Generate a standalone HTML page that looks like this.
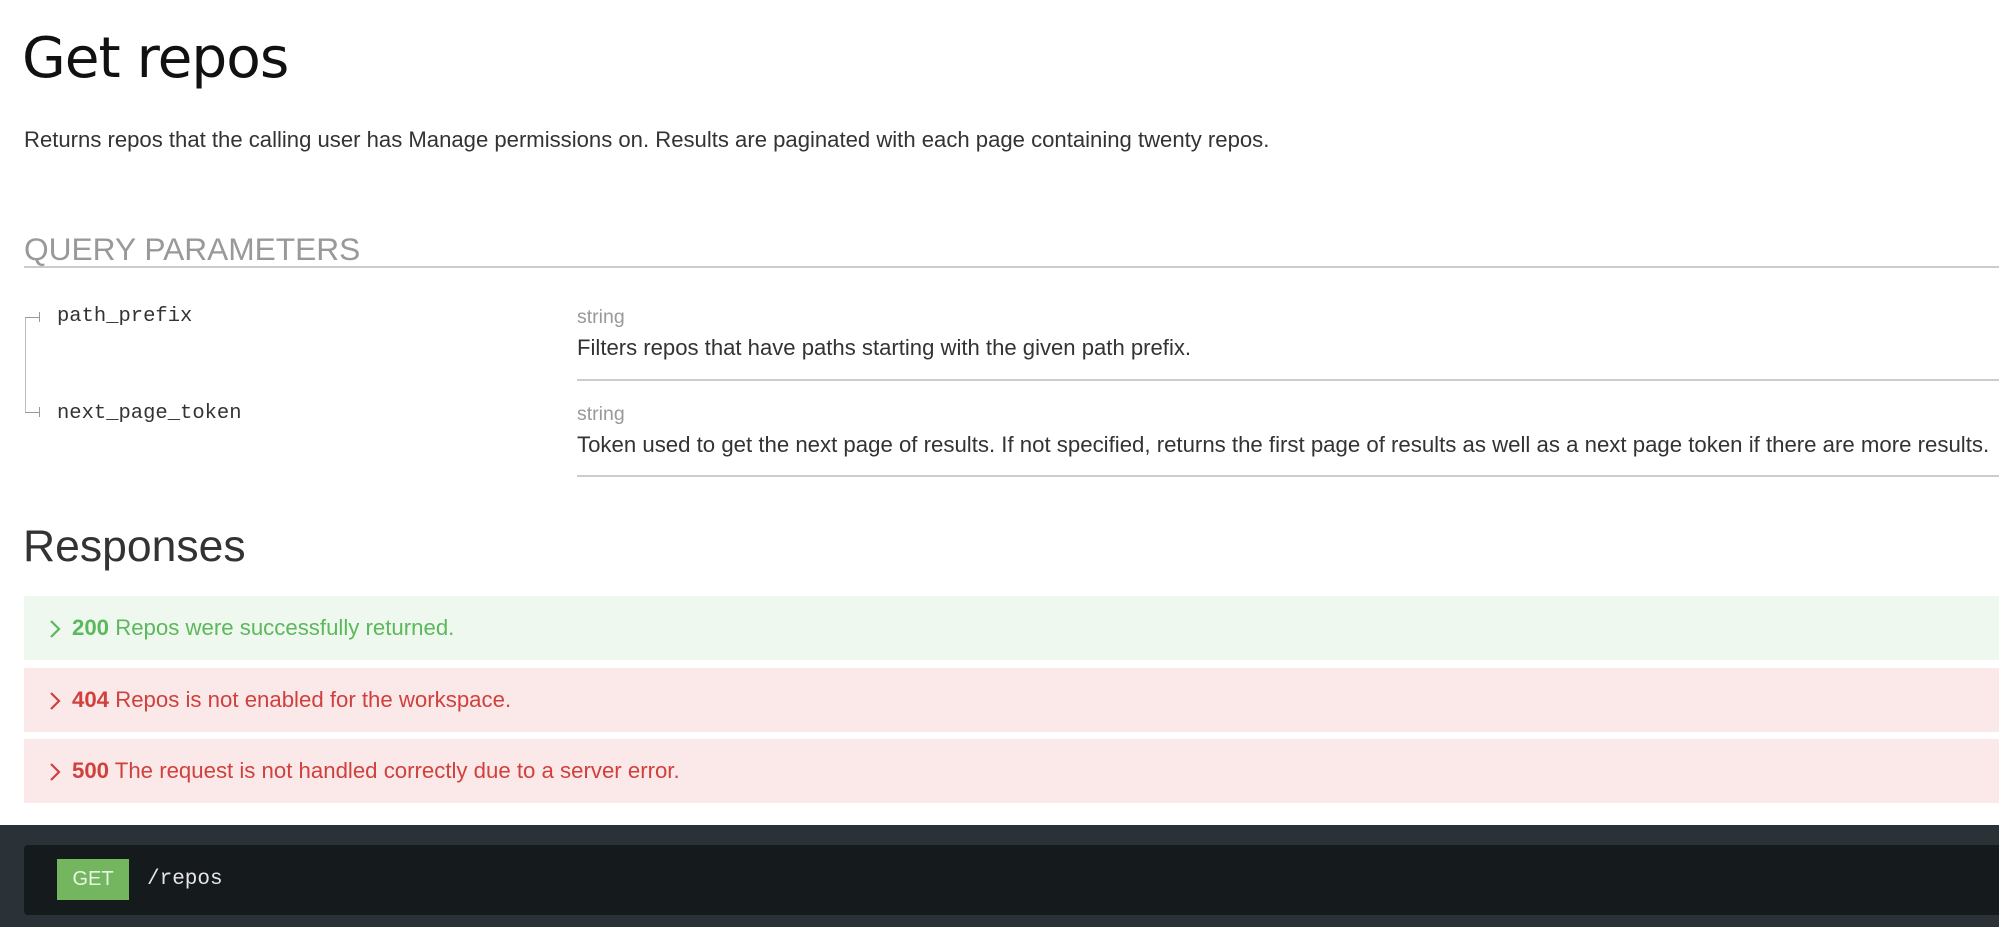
<!DOCTYPE html>
<html><head><meta charset="utf-8"><style>
*{margin:0;padding:0;box-sizing:border-box}
body{width:1999px;height:927px;position:relative;background:#fff;font-family:"Liberation Sans",Arial,sans-serif;overflow:hidden}
.a{position:absolute;white-space:nowrap}
.mono{font-family:"Liberation Mono","Courier New",monospace}
.resp{position:absolute;left:24px;right:0;height:64px;font-size:22.2px;line-height:64px;padding-left:26px}
.resp svg{position:absolute;left:24px;top:23px}
</style></head><body>
<div class="a" style="left:22px;top:26px;font-size:56.5px;color:#111;font-family:'DejaVu Sans','Liberation Sans',sans-serif;letter-spacing:-1px">Get repos</div>
<div class="a" style="left:24px;top:127px;font-size:22.1px;color:#333">Returns repos that the calling user has Manage permissions on. Results are paginated with each page containing twenty repos.</div>
<div class="a" style="left:24px;top:231px;font-size:31.7px;color:#999">QUERY PARAMETERS</div>
<div class="a" style="left:24px;right:0;top:266px;height:2px;background:#ccc"></div>
<div class="a" style="left:25px;top:317px;width:1px;height:95px;background:#bbb"></div>
<div class="a" style="left:25px;top:317px;width:14px;height:1px;background:#999"></div>
<div class="a" style="left:39px;top:312px;width:1px;height:10px;background:#999"></div>
<div class="a" style="left:25px;top:412px;width:14px;height:1px;background:#999"></div>
<div class="a" style="left:39px;top:407px;width:1px;height:10px;background:#999"></div>
<div class="a mono" style="left:57px;top:305px;font-size:20.5px;color:#333">path_prefix</div>
<div class="a mono" style="left:57px;top:402px;font-size:20.5px;color:#333">next_page_token</div>
<div class="a" style="left:577px;top:306px;font-size:19.5px;color:#999">string</div>
<div class="a" style="left:577px;top:335px;font-size:22.1px;color:#333">Filters repos that have paths starting with the given path prefix.</div>
<div class="a" style="left:577px;right:0;top:379px;height:2px;background:#ccc"></div>
<div class="a" style="left:577px;top:403px;font-size:19.5px;color:#999">string</div>
<div class="a" style="left:577px;top:432px;font-size:22.2px;color:#333">Token used to get the next page of results. If not specified, returns the first page of results as well as a next page token if there are more results.</div>
<div class="a" style="left:577px;right:0;top:475px;height:2px;background:#ccc"></div>
<div class="a" style="left:23px;top:522px;font-size:44.5px;color:#333">Responses</div>
<div class="resp" style="top:596px;background:#eff8ee;color:#5cb85c"><svg width="14" height="20" viewBox="0 0 14 20"><path d="M3 2l8 8-8 8" fill="none" stroke="#5cb85c" stroke-width="2.2"/></svg><span style="margin-left:22px"><b>200</b> Repos were successfully returned.</span></div>
<div class="resp" style="top:668px;background:#fbe9e9;color:#d0403c"><svg width="14" height="20" viewBox="0 0 14 20"><path d="M3 2l8 8-8 8" fill="none" stroke="#d0403c" stroke-width="2.2"/></svg><span style="margin-left:22px"><b>404</b> Repos is not enabled for the workspace.</span></div>
<div class="resp" style="top:739px;background:#fbe9e9;color:#d0403c"><svg width="14" height="20" viewBox="0 0 14 20"><path d="M3 2l8 8-8 8" fill="none" stroke="#d0403c" stroke-width="2.2"/></svg><span style="margin-left:22px"><b>500</b> The request is not handled correctly due to a server error.</span></div>
<div class="a" style="left:0;right:0;top:825px;height:102px;background:#2a3137"></div>
<div class="a" style="left:24px;right:0;top:845px;height:70px;background:#151a1d;border-radius:4px 0 0 4px"></div>
<div class="a" style="left:57px;top:859px;width:72px;height:41px;background:#73b65f;color:#e8f5e4;font-size:20px;line-height:41px;text-align:center">GET</div>
<div class="a mono" style="left:147px;top:868px;font-size:21px;color:#e6e6e6">/repos</div>
</body></html>
